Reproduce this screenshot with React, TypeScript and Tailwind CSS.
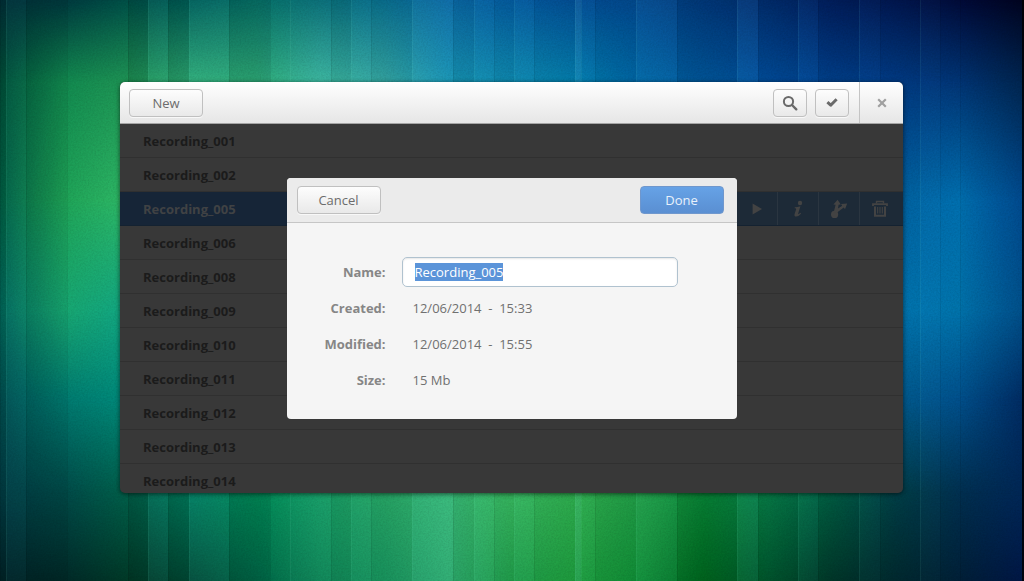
import { useEffect, useRef } from "react";

const COLS = 17;

/* Wallpaper colours: each row is a horizontal blend at the given height. */
const wallpaper: { y: number; colors: string[] }[] = [
  { y: 0, colors: "013038 00393f 005048 00605a 077068 0a6f78 0a7090 0b6aa5 055ca0 044f95 034a90 023a7e 022e70 011f5f 01174f 000b38 000520".split(" ") },
  { y: 82, colors: "00503a 128a50 1f9555 2faf78 2fae7a 3cb8a0 35a9a5 1896b5 0f8ab0 0580b0 0068a8 005aa0 0050a0 00428f 003c85 023575 022650".split(" ") },
  { y: 200, colors: "016046 1fa458 30bb68 2faf78 2fae7a 3cb8a0 35a9a5 1896b5 0f8ab0 0580b0 0068a8 005aa0 0050a0 0058a0 0064a4 0070b0 004a90".split(" ") },
  { y: 310, colors: "02695c 18a872 12a884 18a068 18a068 18a068 28a868 38bb78 38b860 30b050 22a048 088838 08804a 0078b4 0078b4 0074ac 00508c".split(" ") },
  { y: 400, colors: "005052 007a70 008c7c 008060 008a58 18a068 28a868 38bb78 38b860 30b050 22a048 088838 08804a 005c80 005c90 00508c 002c64".split(" ") },
  { y: 494, colors: "003c44 004a48 00604a 008060 008a58 18a068 28a868 38bb78 38b860 30b050 22a048 088838 08804a 006045 004048 003050 002858".split(" ") },
  { y: 581, colors: "012428 002a28 003a28 004e38 006848 108858 1a9860 2fae70 22a04c 1fa040 109038 006a20 005a30 003a2c 002a30 022038 001848".split(" ") },
];

/* [left, right, shade]: positive shades lighten, negative ones darken. */
const stripes: [number, number, number][] = [
  [0, 6, -0.08], [6, 26, 0.03], [26, 67, -0.05], [67, 128, 0], [128, 148, -0.1],
  [148, 168, 0.05], [168, 189, -0.1], [189, 229, 0.05], [229, 270, -0.08], [270, 290, 0],
  [290, 331, 0.02], [331, 351, -0.05], [351, 371, 0.02], [371, 412, -0.04], [412, 453, 0.05],
  [453, 474, -0.05], [474, 494, 0.02], [494, 514, -0.03], [514, 534, 0.03], [534, 575, -0.03],
  [575, 581, 0.1], [581, 595, 0.02], [595, 636, -0.04], [636, 677, 0.04], [677, 737, -0.07],
  [737, 758, 0.06], [758, 798, -0.07], [798, 818, 0.03], [818, 859, -0.06], [859, 880, 0.02],
  [880, 920, -0.02], [920, 940, 0.02], [940, 960, 0], [960, 1022, -0.01], [1022, 1024, -0.8],
];

function Wallpaper() {
  return (
    <svg
      className="absolute inset-0 h-full w-full"
      viewBox="0 0 1024 581"
      preserveAspectRatio="none"
      aria-hidden="true"
    >
      <defs>
        {wallpaper.map((row, i) => {
          const next = wallpaper[i + 1];
          return (
            <g key={row.y}>
              <linearGradient id={`row${i}`}>
                {row.colors.map((c, k) => (
                  <stop key={k} offset={k / (COLS - 1)} stopColor={`#${c}`} />
                ))}
              </linearGradient>
              {next && (
                <>
                  <linearGradient id={`fade${i}`} x1="0" y1={row.y} x2="0" y2={next.y} gradientUnits="userSpaceOnUse">
                    <stop offset="0" stopColor="#fff" />
                    <stop offset="1" stopColor="#fff" stopOpacity="0" />
                  </linearGradient>
                  <mask id={`mask${i}`} maskUnits="userSpaceOnUse" x="0" y="0" width="1024" height="581">
                    <rect width="1024" height="581" fill={`url(#fade${i})`} />
                  </mask>
                </>
              )}
            </g>
          );
        })}
        <filter id="grain" x="0" y="0" width="100%" height="100%">
          <feTurbulence type="fractalNoise" baseFrequency="0.6" numOctaves="2" />
          <feColorMatrix type="matrix" values="0 0 0 0 0  0 0 0 0 0  0 0 0 0 0  0.6 0 0 0 -0.2" />
        </filter>
      </defs>
      {wallpaper
        .map((row, i) => (
          <rect
            key={row.y}
            width="1024"
            height="581"
            fill={`url(#row${i})`}
            mask={i < wallpaper.length - 1 ? `url(#mask${i})` : undefined}
          />
        ))
        .reverse()}
      {stripes.map(([a, b, s]) => (
        <g key={a}>
          <rect x={a} width={b - a} height="581" fill={s > 0 ? "#8fe0ff" : "#000"} opacity={Math.abs(s)} />
          <rect x={a} width="1" height="581" fill={s > 0 ? "#8fffd8" : "#000"} opacity="0.07" />
        </g>
      ))}
      <rect width="1024" height="581" filter="url(#grain)" opacity="0.25" />
    </svg>
  );
}

const recordings = ["001", "002", "005", "006", "008", "009", "010", "011", "012", "013", "014"].map(
  (n) => `Recording_${n}`,
);
const selected = "Recording_005";

const plainButton =
  "flex h-7 items-center justify-center rounded border border-[#c0c0c0] bg-linear-to-b from-[#fdfdfd] to-[#e9e9e9] text-[#6c6c6c] shadow-[0_1px_0_#f8f8f8]";

function SearchIcon() {
  return (
    <svg width="16" height="16" viewBox="0 0 16 16" fill="none" stroke="#6a6a6a">
      <circle cx="6.5" cy="6.5" r="4.6" strokeWidth="2" />
      <path d="M10 10l4.3 4.3" strokeWidth="2.4" strokeLinecap="round" />
    </svg>
  );
}

function CheckIcon() {
  return (
    <svg width="16" height="16" viewBox="0 0 16 16" fill="none" stroke="#6a6a6a" strokeWidth="3">
      <path d="M3.4 7.2l3.3 3L12.6 4.2" strokeLinejoin="round" />
    </svg>
  );
}

function CloseIcon() {
  return (
    <svg width="10" height="10" viewBox="0 0 10 10" stroke="#a0a0a0" strokeWidth="2.2">
      <path d="M1.2 1.2l7.6 7.6M8.8 1.2l-7.6 7.6" />
    </svg>
  );
}

function PlayIcon() {
  return (
    <svg width="16" height="16" viewBox="0 0 16 16" fill="currentColor">
      <path d="M3.6 2.6L13 8l-9.4 5.4z" />
    </svg>
  );
}

function InfoIcon() {
  return (
    <svg width="16" height="18" viewBox="0 0 16 18" fill="currentColor">
      <circle cx="10" cy="3" r="2.2" />
      <path d="M4.8 7.2c1.8 0 3.6-.4 5.6-1L8.2 13.6c-.2.8.4.7 1 .2l1.2-1 .6.7c-1.4 1.9-3 3-4.7 3-1.6 0-2.2-1-1.7-2.6l1.5-4.6c.2-.8-.3-1-1.5-1z" />
    </svg>
  );
}

function ShareIcon() {
  return (
    <svg width="18" height="20" viewBox="0 0 18 20" fill="currentColor">
      <circle cx="4.6" cy="15.4" r="3.6" />
      <path d="M3.8 13L5.6 5.8 3.4 5.4 7.6.8l3.2 4.8-2.2.2-.6 3.6 4.2-2.6-1.2-1.8 6.2-.6-2.2 5.8-1.2-1.6-6.4 4.6z" />
    </svg>
  );
}

function TrashIcon() {
  return (
    <svg width="16" height="18" viewBox="0 0 16 18" fill="none" stroke="currentColor">
      <path d="M4.5 3.5v-2h7v2" strokeWidth="1.4" />
      <path d="M1 6V4.2h14V6" strokeWidth="1.8" />
      <path d="M3 6.6v9.2h10V6.6" strokeWidth="2" />
      <path d="M5.7 7v6.4M8 7v6.4M10.3 7v6.4" strokeWidth="1.1" />
    </svg>
  );
}

const actions = [
  { label: "Play", icon: <PlayIcon /> },
  { label: "Info", icon: <InfoIcon /> },
  { label: "Share", icon: <ShareIcon /> },
  { label: "Delete", icon: <TrashIcon /> },
];

function RecordingRow({ name }: { name: string }) {
  if (name === selected) {
    return (
      <li className="flex h-[34px] shrink-0 items-stretch justify-between border-b border-[#142231] bg-[#162537] pl-[23px] text-[#404244]">
        <span className="self-center">{name}</span>
        <div className="flex bg-[#1d2a37] pr-[3px]">
          {actions.map((a) => (
            <button
              key={a.label}
              type="button"
              aria-label={a.label}
              className="flex w-[41px] items-center justify-center border-l border-[#2a3540] text-[#434343]"
            >
              {a.icon}
            </button>
          ))}
        </div>
      </li>
    );
  }
  return (
    <li className="flex h-[34px] shrink-0 items-center border-b border-[#303030] px-[23px]">{name}</li>
  );
}

function PropertiesDialog() {
  const nameRef = useRef<HTMLInputElement>(null);
  useEffect(() => {
    nameRef.current?.focus();
    nameRef.current?.select();
  }, []);

  return (
    <form
      role="dialog"
      aria-label="Recording properties"
      onSubmit={(e) => e.preventDefault()}
      className="w-[450px] overflow-hidden rounded bg-[#f5f5f5] text-[#707070]"
    >
      <div className="flex h-[45px] items-center justify-between border-b border-[#c6c6c6] bg-[#ebebeb] pr-[13px] pl-[10px]">
        <button type="button" className={`${plainButton} w-[84px]`}>
          Cancel
        </button>
        <button
          type="submit"
          className="h-7 w-[84px] rounded border border-[#6f97cd] bg-linear-to-b from-[#66a2e6] to-[#5a8fd2] text-[#e9f1fb]"
        >
          Done
        </button>
      </div>
      <div className="grid grid-cols-[99px_276px] items-center gap-x-4 pt-[34px] pb-[21px]">
        <label htmlFor="name" className="text-right font-bold text-[#868686]">
          Name:
        </label>
        <input
          id="name"
          ref={nameRef}
          defaultValue={selected}
          className="h-[30px] min-w-0 rounded-[5px] border border-[#b0c2cf] bg-white px-3 leading-4 shadow-[inset_0_1px_2px_#e6e6e6] outline-none selection:bg-[#5b94d9] selection:text-white"
        />
        <dl className="col-span-2 grid auto-rows-[36px] grid-cols-subgrid items-center pt-[3px]">
          <dt className="text-right font-bold text-[#868686]">Created:</dt>
          <dd className="pl-[11px] whitespace-pre">12/06/2014  -  15:33</dd>
          <dt className="text-right font-bold text-[#868686]">Modified:</dt>
          <dd className="pl-[11px] whitespace-pre">12/06/2014  -  15:55</dd>
          <dt className="text-right font-bold text-[#868686]">Size:</dt>
          <dd className="pl-[11px]">15 Mb</dd>
        </dl>
      </div>
    </form>
  );
}

export default function App() {
  return (
    <div className="relative flex h-screen flex-col overflow-hidden pt-[82px] pr-[121px] pb-[88px] pl-[120px] font-['Open_Sans','Noto_Sans',sans-serif] text-[13px] leading-[18px]">
      <Wallpaper />
      <main className="relative flex min-h-0 flex-1 flex-col overflow-hidden rounded-[5px] bg-[#383838] shadow-[0_1px_5px_rgba(0,0,0,0.6)]">
        <header className="flex h-[42px] shrink-0 items-stretch border-b border-[#a5a5a5] bg-linear-to-b from-white to-[#e6e6e6] pl-[9px]">
          <div className="flex flex-1 items-center justify-between pr-[10px]">
            <button type="button" className={`${plainButton} w-[74px]`}>
              New
            </button>
            <div className="flex gap-2">
              <button type="button" aria-label="Search" className={`${plainButton} w-[34px]`}>
                <SearchIcon />
              </button>
              <button type="button" aria-label="Select" className={`${plainButton} w-[34px]`}>
                <CheckIcon />
              </button>
            </div>
          </div>
          <button
            type="button"
            aria-label="Close"
            className="flex w-11 items-center justify-center border-l border-[#c4c4c4]"
          >
            <CloseIcon />
          </button>
        </header>
        <section className="relative min-h-0 flex-1 overflow-hidden">
          <ul className="flex flex-col font-bold text-[#1b1b1b]">
            {recordings.map((name) => (
              <RecordingRow key={name} name={name} />
            ))}
          </ul>
          <div className="absolute inset-0 flex items-start justify-center pt-[54px]">
            <PropertiesDialog />
          </div>
        </section>
      </main>
    </div>
  );
}
